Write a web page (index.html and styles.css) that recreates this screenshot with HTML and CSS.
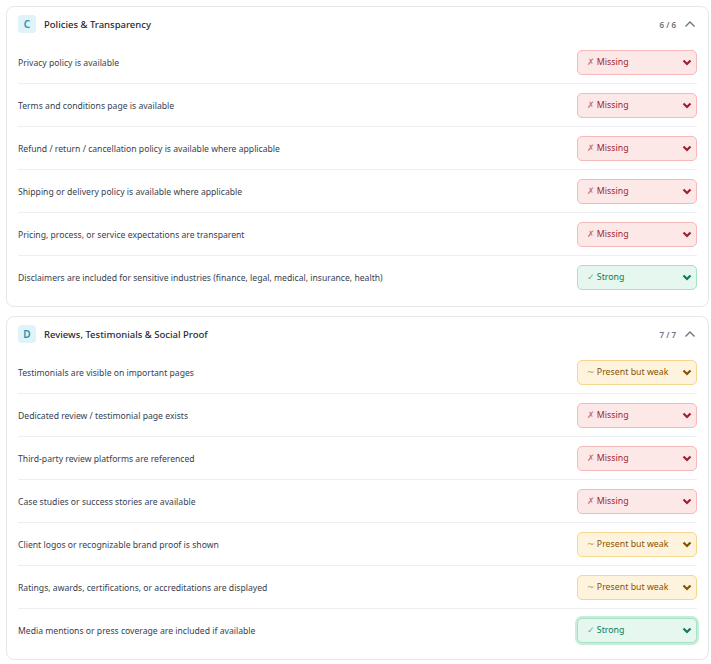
FILE: index.html
```html
<!DOCTYPE html>
<html lang="en">
<head>
    <meta charset="UTF-8">
    <meta name="viewport" content="width=device-width, initial-scale=1.0">
    <title>Trust Checklist</title>
    <link rel="stylesheet" href="styles.css">
</head>
<body>

    <div class="page">

        <!-- Section C -->
        <div class="card">
            <div class="card-header">
                <span class="badge">C</span>
                <span class="card-title">Policies &amp; Transparency</span>
                <span class="count">6 / 6</span>
                <svg class="collapse" width="12" height="8" viewBox="0 0 12 8"><path d="M1.5 6.5 L6 2 L10.5 6.5" fill="none" stroke="#6b7280" stroke-width="1.3"/></svg>
            </div>

            <div class="row">
                <span class="label">Privacy policy is available</span>
                <div class="status missing"><span><i class="mark">✗</i> Missing</span><svg width="10" height="7" viewBox="0 0 10 7"><path d="M1.5 1.5 L5 5 L8.5 1.5" fill="none" stroke="currentColor" stroke-width="2.2"/></svg></div>
            </div>
            <div class="row">
                <span class="label">Terms and conditions page is available</span>
                <div class="status missing"><span><i class="mark">✗</i> Missing</span><svg width="10" height="7" viewBox="0 0 10 7"><path d="M1.5 1.5 L5 5 L8.5 1.5" fill="none" stroke="currentColor" stroke-width="2.2"/></svg></div>
            </div>
            <div class="row">
                <span class="label">Refund / return / cancellation policy is available where applicable</span>
                <div class="status missing"><span><i class="mark">✗</i> Missing</span><svg width="10" height="7" viewBox="0 0 10 7"><path d="M1.5 1.5 L5 5 L8.5 1.5" fill="none" stroke="currentColor" stroke-width="2.2"/></svg></div>
            </div>
            <div class="row">
                <span class="label">Shipping or delivery policy is available where applicable</span>
                <div class="status missing"><span><i class="mark">✗</i> Missing</span><svg width="10" height="7" viewBox="0 0 10 7"><path d="M1.5 1.5 L5 5 L8.5 1.5" fill="none" stroke="currentColor" stroke-width="2.2"/></svg></div>
            </div>
            <div class="row">
                <span class="label">Pricing, process, or service expectations are transparent</span>
                <div class="status missing"><span><i class="mark">✗</i> Missing</span><svg width="10" height="7" viewBox="0 0 10 7"><path d="M1.5 1.5 L5 5 L8.5 1.5" fill="none" stroke="currentColor" stroke-width="2.2"/></svg></div>
            </div>
            <div class="row">
                <span class="label">Disclaimers are included for sensitive industries (finance, legal, medical, insurance, health)</span>
                <div class="status strong"><span><i class="mark">✓</i> Strong</span><svg width="10" height="7" viewBox="0 0 10 7"><path d="M1.5 1.5 L5 5 L8.5 1.5" fill="none" stroke="currentColor" stroke-width="2.2"/></svg></div>
            </div>
        </div>

        <!-- Section D -->
        <div class="card">
            <div class="card-header">
                <span class="badge">D</span>
                <span class="card-title">Reviews, Testimonials &amp; Social Proof</span>
                <span class="count">7 / 7</span>
                <svg class="collapse" width="12" height="8" viewBox="0 0 12 8"><path d="M1.5 6.5 L6 2 L10.5 6.5" fill="none" stroke="#6b7280" stroke-width="1.3"/></svg>
            </div>

            <div class="row">
                <span class="label">Testimonials are visible on important pages</span>
                <div class="status weak"><span><i class="mark">~</i> Present but weak</span><svg width="10" height="7" viewBox="0 0 10 7"><path d="M1.5 1.5 L5 5 L8.5 1.5" fill="none" stroke="currentColor" stroke-width="2.2"/></svg></div>
            </div>
            <div class="row">
                <span class="label">Dedicated review / testimonial page exists</span>
                <div class="status missing"><span><i class="mark">✗</i> Missing</span><svg width="10" height="7" viewBox="0 0 10 7"><path d="M1.5 1.5 L5 5 L8.5 1.5" fill="none" stroke="currentColor" stroke-width="2.2"/></svg></div>
            </div>
            <div class="row">
                <span class="label">Third-party review platforms are referenced</span>
                <div class="status missing"><span><i class="mark">✗</i> Missing</span><svg width="10" height="7" viewBox="0 0 10 7"><path d="M1.5 1.5 L5 5 L8.5 1.5" fill="none" stroke="currentColor" stroke-width="2.2"/></svg></div>
            </div>
            <div class="row">
                <span class="label">Case studies or success stories are available</span>
                <div class="status missing"><span><i class="mark">✗</i> Missing</span><svg width="10" height="7" viewBox="0 0 10 7"><path d="M1.5 1.5 L5 5 L8.5 1.5" fill="none" stroke="currentColor" stroke-width="2.2"/></svg></div>
            </div>
            <div class="row">
                <span class="label">Client logos or recognizable brand proof is shown</span>
                <div class="status weak"><span><i class="mark">~</i> Present but weak</span><svg width="10" height="7" viewBox="0 0 10 7"><path d="M1.5 1.5 L5 5 L8.5 1.5" fill="none" stroke="currentColor" stroke-width="2.2"/></svg></div>
            </div>
            <div class="row">
                <span class="label">Ratings, awards, certifications, or accreditations are displayed</span>
                <div class="status weak"><span><i class="mark">~</i> Present but weak</span><svg width="10" height="7" viewBox="0 0 10 7"><path d="M1.5 1.5 L5 5 L8.5 1.5" fill="none" stroke="currentColor" stroke-width="2.2"/></svg></div>
            </div>
            <div class="row">
                <span class="label">Media mentions or press coverage are included if available</span>
                <div class="status strong focused"><span><i class="mark">✓</i> Strong</span><svg width="10" height="7" viewBox="0 0 10 7"><path d="M1.5 1.5 L5 5 L8.5 1.5" fill="none" stroke="currentColor" stroke-width="2.2"/></svg></div>
            </div>
        </div>

    </div>

</body>
</html>
```

FILE: styles.css
```css
body {
    font-family: "Noto Sans", "Open Sans", sans-serif;
    background-color: #ffffff;
    margin: 0;
    padding: 0;
    color: #374151;
}

.page {
    padding: 6px 2px 4px 6px;
    display: flex;
    flex-direction: column;
    gap: 9px;
}

.card {
    border: 1px solid #e5e7eb;
    border-radius: 8px;
    padding: 0 11px 8px 11px;
    background-color: white;
}

.card-header {
    display: flex;
    align-items: center;
    padding: 8px 0;
    gap: 8px;
}

.badge {
    width: 18px;
    height: 18px;
    border-radius: 4px;
    background-color: #e0f3f8;
    color: #1597b3;
    font-size: 10px;
    font-weight: 600;
    display: flex;
    align-items: center;
    justify-content: center;
}

.card-title {
    font-size: 9.5px;
    font-weight: 500;
    color: #1f2937;
    flex: 1;
}

.count {
    font-size: 8px;
    font-weight: 600;
    color: #6b7280;
    margin-right: 0;
}

.collapse {
    margin-right: 1px;
}

.row {
    display: flex;
    align-items: center;
    justify-content: space-between;
    height: 42px;
    border-bottom: 1px solid #eceef2;
}

.row:last-child {
    border-bottom: none;
}

.label {
    font-size: 8.65px;
    padding-top: 1px;
}

.status {
    width: 120px;
    height: 25px;
    box-sizing: border-box;
    border: 1px solid;
    border-radius: 5px;
    display: flex;
    align-items: center;
    justify-content: space-between;
    padding: 0 4px 0 9px;
    font-size: 8.8px;
    cursor: pointer;
}

.mark {
    font-style: normal;
    font-family: "DejaVu Sans", sans-serif;
    font-size: 9px;
    opacity: 0.6;
}

.missing {
    background-color: #fde8e8;
    border-color: #f6b8b8;
    color: #9f1f2f;
}

.weak {
    background-color: #fef4dd;
    border-color: #f6d58d;
    color: #8a5100;
}

.strong {
    background-color: #e5f7ee;
    border-color: #a7e1c4;
    color: #0f7a57;
}

.focused {
    box-shadow: 0 0 0 2px #c7eedb;
}
```
